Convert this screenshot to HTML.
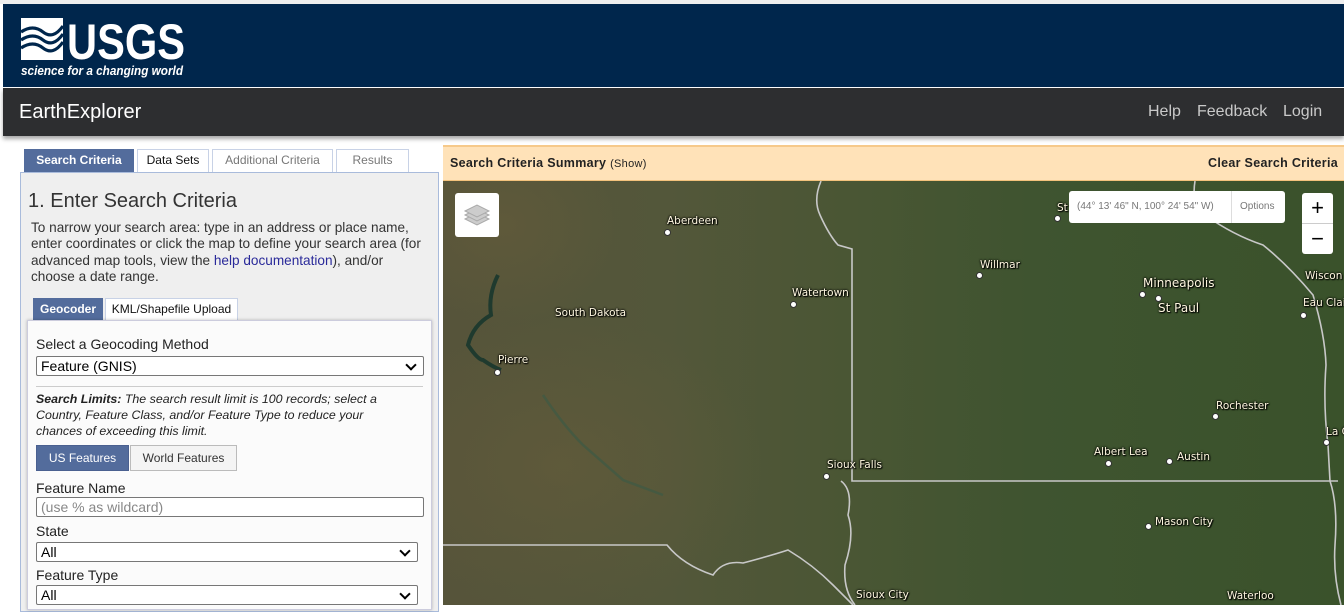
<!DOCTYPE html>
<html><head><meta charset="utf-8"><style>
*{box-sizing:border-box;margin:0;padding:0}
body{width:1344px;height:605px;overflow:hidden;background:#fff;font-family:"Liberation Sans",Arial,sans-serif;position:relative}
.top{position:absolute;left:0;top:0;width:1344px;height:4px;background:#eee}
.navy{position:absolute;left:3px;top:4px;width:1341px;height:83px;background:#00264c}
.gray{position:absolute;left:3px;top:88px;width:1341px;height:48px;background:#2d2e30;box-shadow:0 3px 4px rgba(0,0,0,.35)}
.ee{position:absolute;left:19px;top:101px;color:#fff;font-size:20px}
.nav{position:absolute;top:103px;color:#c9c9c9;font-size:16px}
.tab{position:absolute;top:149px;height:23px;border:1px solid #c8d2e6;border-bottom:none;background:#fff;font-size:12px;color:#777;text-align:center;line-height:21px;white-space:nowrap}
.panel{position:absolute;left:20px;top:172px;width:419px;height:440px;background:#efefef;border:1px solid #a9bbdb}
.in{position:absolute;left:27px;top:320px;width:405px;height:290px;background:#fbfbfb;border:1px solid #ccd;box-shadow:0 0 3px rgba(0,0,0,.25)}
.sel{position:absolute;height:20px;border:1px solid #777;border-radius:2px;background:#fff;font-size:14px;padding-left:4px;line-height:18px;color:#000}
.sel.a:after{content:"";position:absolute;right:8px;top:4px;width:6px;height:6px;border-right:2px solid #000;border-bottom:2px solid #000;transform:rotate(45deg)}
.lbl{position:absolute;font-size:14px;color:#222}
.map{position:absolute;left:443px;top:145px;width:901px;height:460px;background:linear-gradient(90deg,#56543a 0%,#53573a 25%,#4a5634 45%,#3f5430 65%,#3a522b 100%);overflow:hidden}
.sum{position:absolute;left:443px;top:145px;width:901px;height:36px;background:#ffe2b8;border-top:2px solid #f6c98a;border-bottom:1px solid #f3c27c}
.c{position:absolute;white-space:nowrap;font-family:"DejaVu Sans",sans-serif;font-size:10.5px;color:#fff8e0;text-shadow:0 0 2px #000,0 0 2px #000,1px 1px 1px #000}
.d{position:absolute;width:7px;height:7px;border-radius:50%;background:#fff;border:1px solid #333}
</style></head><body>
<div class="top"></div>
<div class="navy">
<svg width="200" height="80" style="position:absolute;left:14px;top:8px">
<rect x="4" y="6" width="42" height="42" fill="#fff"/>
<path d="M4 20 Q16 12 26 20 T46 14 M4 28 Q16 20 26 28 T46 22 M4 36 Q16 28 26 36 T46 30" stroke="#00264c" stroke-width="3.2" fill="none"/>
<text x="50" y="47" fill="#fff" font-family="Liberation Sans" font-weight="bold" font-size="50" textLength="118" lengthAdjust="spacingAndGlyphs">USGS</text>
<text x="4" y="63" fill="#fff" font-family="Liberation Sans" font-weight="bold" font-style="italic" font-size="13" textLength="162" lengthAdjust="spacingAndGlyphs">science for a changing world</text>
</svg></div>
<div class="gray"></div>
<div class="ee">EarthExplorer</div>
<div class="nav" style="left:1148px">Help</div>
<div class="nav" style="left:1197px">Feedback</div>
<div class="nav" style="left:1283px">Login</div>

<div class="tab" style="left:24px;width:110px;background:#536c9c;color:#fff;font-weight:bold;border-color:#536c9c">Search Criteria</div>
<div class="tab" style="left:137px;width:72px;color:#111">Data Sets</div>
<div class="tab" style="left:212px;width:121px">Additional Criteria</div>
<div class="tab" style="left:336px;width:73px">Results</div>
<div class="panel"></div>
<div style="position:absolute;left:28px;top:190px;font-size:20px;color:#333">1. Enter Search Criteria</div>
<div style="position:absolute;left:31px;top:220px;width:402px;font-size:13.6px;line-height:16.4px;color:#333">To narrow your search area: type in an address or place name, enter coordinates or click the map to define your search area (for advanced map tools, view the <span style="color:#2a2a9a">help documentation</span>), and/or<br>choose a date range.</div>
<div class="tab" style="left:33px;top:298px;width:70px;background:#536c9c;color:#fff;font-weight:bold;border-color:#536c9c">Geocoder</div>
<div class="tab" style="left:105px;top:298px;width:133px;color:#111">KML/Shapefile Upload</div>
<div class="in"></div>
<div class="lbl" style="left:36px;top:336px">Select a Geocoding Method</div>
<div class="sel a" style="left:36px;top:356px;width:388px">Feature (GNIS)</div>
<div style="position:absolute;left:36px;top:386px;width:387px;border-top:1px solid #ccc"></div>
<div style="position:absolute;left:36px;top:391px;width:360px;font-size:12.4px;line-height:16px;font-style:italic;color:#222"><b>Search Limits:</b> The search result limit is 100 records; select a Country, Feature Class, and/or Feature Type to reduce your chances of exceeding this limit.</div>
<div style="position:absolute;left:36px;top:445px;width:93px;height:26px;background:#536c9c;color:#fff;font-size:12px;text-align:center;line-height:24px;border:1px solid #4a6090">US Features</div>
<div style="position:absolute;left:130px;top:445px;width:107px;height:26px;background:#f4f4f4;color:#333;font-size:12px;text-align:center;line-height:24px;border:1px solid #bbb">World Features</div>
<div class="lbl" style="left:36px;top:480px">Feature Name</div>
<div class="sel" style="left:36px;top:497px;width:388px;color:#888">(use % as wildcard)</div>
<div class="lbl" style="left:36px;top:523px">State</div>
<div class="sel a" style="left:36px;top:542px;width:382px">All</div>
<div class="lbl" style="left:36px;top:567px">Feature Type</div>
<div class="sel a" style="left:36px;top:585px;width:382px">All</div>

<div class="map">
<svg width="901" height="460" style="position:absolute;left:0;top:0">
<defs><radialGradient id="g1"><stop offset="0" stop-color="#6a5e3a" stop-opacity=".45"/><stop offset="1" stop-color="#6a5e3a" stop-opacity="0"/></radialGradient></defs>
<ellipse cx="120" cy="320" rx="200" ry="150" fill="url(#g1)"/>
<ellipse cx="60" cy="80" rx="120" ry="100" fill="url(#g1)"/>
<path d="M55 130 Q45 150 48 170 Q30 180 25 200 Q35 215 40 215 Q50 222 58 225" stroke="#1f3a2e" stroke-width="4" fill="none"/>
<path d="M100 250 Q120 280 140 300 L180 335 L220 350" stroke="#3d5a44" stroke-width="2.5" fill="none" opacity=".7"/>
<g stroke="#c8c8c8" stroke-width="1.6" fill="none">
<path d="M378 36 Q370 55 377 70 Q386 90 395 100 L409 104 L409 336 L895 336"/>
<path d="M0 400 L224 400 Q240 420 270 430 Q280 415 300 418 Q330 410 345 405 Q370 420 390 440 Q400 450 410 460"/>
<path d="M398 336 Q410 345 405 370 Q412 390 402 420 Q400 445 412 460"/>
<path d="M752 36 Q748 60 762 70 Q790 90 820 100 Q845 120 870 150 Q882 190 883 220 Q880 260 885 300 L887 336 Q895 360 892 400 Q890 430 898 460"/>
</g>
</svg>
<div style="position:absolute;left:12px;top:48px;width:44px;height:44px;background:#fff;border-radius:3px">
<svg width="44" height="44"><g fill="#ccc" stroke="#aaa"><path d="M10 26 L22 20 L34 26 L22 32Z"/><path d="M10 22 L22 16 L34 22 L22 28Z"/><path d="M10 18 L22 12 L34 18 L22 24Z"/></g></svg></div>
<div style="position:absolute;left:626px;top:46px;width:216px;height:32px;background:#fff;border-radius:3px;font-size:10px;color:#777;line-height:31px;white-space:nowrap"><span style="margin-left:8px">(44° 13' 46" N, 100° 24' 54" W)</span><span style="position:absolute;left:162px;top:0;border-left:1px solid #ddd;padding-left:8px;height:32px">Options</span></div>
<div style="position:absolute;left:859px;top:48px;width:31px;height:61px;background:#fff;border-radius:3px;font-size:22px;text-align:center;line-height:30px;color:#000">+<div style="border-top:1px solid #ccc">−</div></div>
</div>
<div class="sum"><span style="position:absolute;left:7px;top:9px;font-size:12.5px;font-weight:bold;color:#222;letter-spacing:.3px">Search Criteria Summary <span style="font-weight:normal;font-size:11px">(Show)</span></span><span style="position:absolute;right:6px;top:9px;font-size:12.5px;font-weight:bold;color:#222;letter-spacing:.3px">Clear Search Criteria</span></div>

<div class="c" style="left:667px;top:215px">Aberdeen</div><div class="d" style="left:664px;top:229px"></div>
<div class="c" style="left:792px;top:287px">Watertown</div><div class="d" style="left:790px;top:301px"></div>
<div class="c" style="left:555px;top:307px">South Dakota</div>
<div class="c" style="left:498px;top:354px">Pierre</div><div class="d" style="left:494px;top:369px"></div>
<div class="c" style="left:980px;top:259px">Willmar</div><div class="d" style="left:976px;top:272px"></div>
<div class="c" style="left:1057px;top:202px">St</div><div class="d" style="left:1054px;top:215px"></div>
<div class="c" style="left:1143px;top:276px;font-size:12px">Minneapolis</div><div class="d" style="left:1139px;top:291px"></div>
<div class="c" style="left:1158px;top:301px;font-size:12px">St Paul</div><div class="d" style="left:1155px;top:295px"></div>
<div class="c" style="left:1305px;top:270px">Wiscon</div>
<div class="c" style="left:1303px;top:297px">Eau Clai</div><div class="d" style="left:1300px;top:312px"></div>
<div class="c" style="left:1216px;top:400px">Rochester</div><div class="d" style="left:1212px;top:413px"></div>
<div class="c" style="left:1326px;top:426px">La C</div><div class="d" style="left:1323px;top:439px"></div>
<div class="c" style="left:1094px;top:446px">Albert Lea</div><div class="d" style="left:1105px;top:460px"></div>
<div class="c" style="left:1177px;top:451px">Austin</div><div class="d" style="left:1166px;top:458px"></div>
<div class="c" style="left:827px;top:459px">Sioux Falls</div><div class="d" style="left:823px;top:473px"></div>
<div class="c" style="left:1155px;top:516px">Mason City</div><div class="d" style="left:1145px;top:523px"></div>
<div class="c" style="left:856px;top:589px">Sioux City</div>
<div class="c" style="left:1227px;top:590px">Waterloo</div>
</body></html>
